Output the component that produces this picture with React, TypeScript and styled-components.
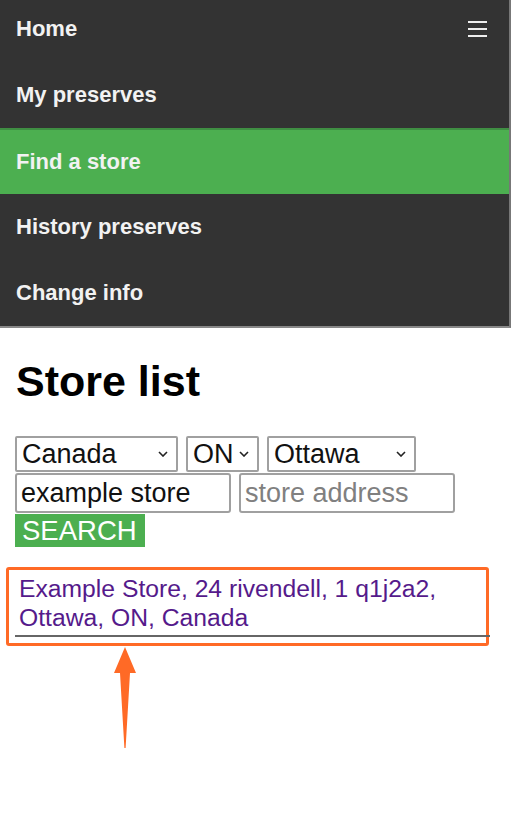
import React from "react";
import { createGlobalStyle, styled } from "styled-components";

const GlobalStyle = createGlobalStyle`
  html, body {
    margin: 0;
    padding: 0;
    background: #fff;
    font-family: "Liberation Sans", Arial, sans-serif;
  }
  * {
    box-sizing: border-box;
  }
`;

const chevron =
  "data:image/svg+xml;utf8,<svg xmlns='http://www.w3.org/2000/svg' width='10' height='6' viewBox='0 0 10 6'><path d='M1 1 L5 5 L9 1' fill='none' stroke='%23222' stroke-width='1.6'/></svg>";

const Nav = styled.nav`
  display: flex;
  flex-direction: column;
  background: #333;
  border-right: 2px solid #777;
  border-bottom: 2px solid #888;
`;

const NavItem = styled.a<{ $active?: boolean; $first?: boolean }>`
  display: flex;
  align-items: center;
  justify-content: space-between;
  height: ${(p) => (p.$first ? "62px" : "66px")};
  padding: ${(p) => (p.$first ? "0 22px 4px 16px" : "0 22px 0 16px")};
  background: ${(p) => (p.$active ? "#4caf50" : "transparent")};
  border-top: ${(p) => (p.$active ? "2px solid #3f8f43" : "none")};
  color: #f2f2f2;
  font-size: 22px;
  font-weight: bold;
  line-height: 1;
  text-decoration: none;
`;

const Burger = styled.svg`
  display: block;
  width: 19px;
  height: 16px;
`;

const Main = styled.main`
  padding: 28px 16px 40px 15px;
`;

const Title = styled.h1`
  margin: 0 0 30px 1px;
  font-size: 43px;
  line-height: 50px;
  font-weight: bold;
  color: #000;
`;

const Form = styled.form`
  display: flex;
  flex-direction: column;
  align-items: flex-start;
  gap: 1px;
`;

const Row = styled.div`
  display: flex;
  gap: 8px;
`;

const Select = styled.select<{ $w: number }>`
  appearance: none;
  width: ${(p) => p.$w}px;
  height: 36px;
  padding: 0 0 0 5px;
  border: 2px solid #a0a0a0;
  border-radius: 2px;
  background: #fff url("${chevron}") no-repeat right 8px center;
  font-family: "Liberation Sans", Arial, sans-serif;
  font-size: 27px;
  color: #111;
`;

const Input = styled.input`
  width: 216px;
  height: 40px;
  padding: 0 4px;
  border: 2px solid #a0a0a0;
  border-radius: 3px;
  font-family: "Liberation Sans", Arial, sans-serif;
  font-size: 27px;
  color: #111;

  &::placeholder {
    color: #808080;
  }
`;

const SearchButton = styled.button`
  height: 33px;
  width: 130px;
  padding: 0 7px;
  border: none;
  background: #4caf50;
  color: #fff;
  font-family: "Liberation Sans", Arial, sans-serif;
  font-size: 27.5px;
  line-height: 33px;
  text-align: left;
`;

const Highlight = styled.div`
  margin: 20px 6px 0 -9px;
  padding: 0 0 6px 6px;
  border: 3px solid #ff6a26;
  border-radius: 3px;
`;

const StoreItem = styled.a`
  display: block;
  margin-right: -4px;
  padding: 4px 4px 3px 4px;
  border-bottom: 2px solid #666;
  color: #551a8b;
  font-size: 24.7px;
  line-height: 29px;
  text-decoration: none;
`;

const Arrow = styled.svg`
  display: block;
  margin: 1px 0 0 95px;
`;

const links = ["Home", "My preserves", "Find a store", "History preserves", "Change info"];

const App = () => {
  return (
    <>
      <GlobalStyle />
      <Nav>
        {links.map((label, i) => (
          <NavItem key={label} href="#" $first={i === 0} $active={label === "Find a store"}>
            {label}
            {i === 0 && (
              <Burger viewBox="0 0 19 16">
                <rect x="0" y="0" width="19" height="2" fill="#eee" />
                <rect x="0" y="7" width="19" height="2" fill="#eee" />
                <rect x="0" y="14" width="19" height="2" fill="#eee" />
              </Burger>
            )}
          </NavItem>
        ))}
      </Nav>
      <Main>
        <Title>Store list</Title>
        <Form onSubmit={(e) => e.preventDefault()}>
          <Row>
            <Select $w={163} defaultValue="Canada">
              <option>Canada</option>
            </Select>
            <Select $w={73} defaultValue="ON">
              <option>ON</option>
            </Select>
            <Select $w={149} defaultValue="Ottawa">
              <option>Ottawa</option>
            </Select>
          </Row>
          <Row>
            <Input type="text" defaultValue="example store" />
            <Input type="text" placeholder="store address" />
          </Row>
          <SearchButton type="submit">SEARCH</SearchButton>
        </Form>
        <Highlight>
          <StoreItem href="#">Example Store, 24 rivendell, 1 q1j2a2, Ottawa, ON, Canada</StoreItem>
        </Highlight>
        <Arrow width="30" height="102" viewBox="0 0 30 102">
          <path d="M15 0 L26 26 L20 26 L15.6 101 L14.4 101 L10 26 L4 26 Z" fill="#ff6a26" />
        </Arrow>
      </Main>
    </>
  );
};

export default App;
